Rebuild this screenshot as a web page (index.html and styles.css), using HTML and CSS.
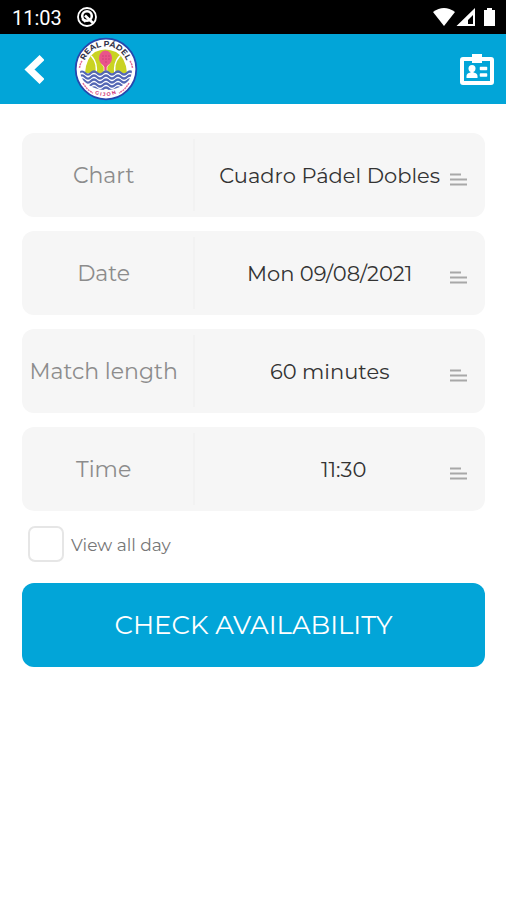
FILE: index.html
```html
<!DOCTYPE html>
<html lang="en">
<head>
<meta charset="utf-8">
<meta name="viewport" content="width=device-width, initial-scale=1">
<title>Check availability</title>
<link rel="stylesheet" href="styles.css">
</head>
<body>
<div class="status">
  <span class="clock">11:03</span>
  <svg class="status-app" width="22" height="22" viewBox="0 0 22 22" fill="none" stroke="#fff" aria-hidden="true">
    <circle cx="11" cy="11" r="9" stroke-width="1.800"/>
    <circle cx="11" cy="10" r="4.800" stroke-width="2.500"/>
    <path d="M9 9.500l8 7.500" stroke-width="2.600"/>
    <path d="M6 13l3.500 3" stroke-width="1.800"/>
  </svg>
  <svg class="status-icons" width="66" height="20" viewBox="0 0 66 20" fill="#fff" aria-hidden="true">
    <path d="M1 5Q12-3 23 5L12 19Z"/>
    <path fill-rule="evenodd" d="M43 1v18H24.500ZM41 8v9h-5v-4Z"/>
    <path d="M55 1h5v2h3v16H52V3h3Z"/>
  </svg>
</div>
<header class="bar">
  <button class="icon-button" type="button" aria-label="Back">
    <svg width="22" height="30" viewBox="0 0 22 30" fill="none" stroke="#fff" stroke-width="7"><path d="M20 3.500L7.500 15.500 20 27.500"/></svg>
  </button>
  <svg class="logo" width="64" height="64" viewBox="0 0 64 64" role="img" aria-label="Real Pádel">
    <defs>
      <path id="arc-top" d="M9 32a22.500 22.500 0 0 1 45 0"/>
      <path id="arc-bottom" d="M5 32a26.500 27 0 0 0 53 0"/>
      <clipPath id="court"><path d="M11 36Q12 21 21 15q10-5 21 0 10 6 11 21Z"/></clipPath>
      <clipPath id="sea"><path d="M6 33h52q0 9-7 14-9 6-19 6t-19-6q-7-5-7-14Z"/></clipPath>
    </defs>
    <circle cx="32" cy="32" r="30.300" fill="#fff" stroke="#2647ae" stroke-width="1.800"/>
    <g clip-path="url(#court)">
      <path d="M10 10h44v26H10Z" fill="#c9d322"/>
      <path d="M15 17q9 7 7 19M48 17q-9 7-7 19" fill="none" stroke="#fff" stroke-width="1.500"/>
    </g>
    <path d="M27 26l3 4v4h3v-4l3-4Z" fill="#e94b80" stroke="#fff" stroke-width=".7"/>
    <ellipse cx="31.500" cy="21" rx="6.500" ry="7.500" fill="#e9548a"/>
    <path d="M29 19h0M32 19h0M35 19h0M29 22h0M32 22h0M35 22h0M32 25h0" stroke="#a52b65" stroke-linecap="round"/>
    <g clip-path="url(#sea)" fill="none" stroke="#5366b4" stroke-width="2.200">
      <path d="M5 36q3-3 6 0t6 0 6 0 6 0 6 0 6 0 6 0 6 0 6 0"/>
      <path d="M5 40q3-3 6 0t6 0 6 0 6 0 6 0 6 0 6 0 6 0 6 0"/>
      <path d="M5 44q3-3 6 0t6 0 6 0 6 0 6 0 6 0 6 0 6 0 6 0"/>
      <path d="M5 48q3-3 6 0t6 0 6 0 6 0 6 0 6 0 6 0 6 0 6 0"/>
      <path d="M5 52q3-3 6 0t6 0 6 0 6 0 6 0 6 0 6 0 6 0 6 0"/>
    </g>
    <path d="M8 24q-2 3-2.500 7M56 24q2 3 2.500 7M9 46q4 7 10 10M55 46q-4 7-10 10" fill="none" stroke="#e36b98" stroke-width="1.500" stroke-dasharray="2 .7"/>
    <text class="logo-name"><textPath href="#arc-top" startOffset="50%">REAL PÁDEL</textPath></text>
    <text class="logo-town"><textPath href="#arc-bottom" startOffset="50%">G I J O N</textPath></text>
  </svg>
  <button class="icon-button card" type="button" aria-label="Membership card">
    <svg width="34" height="32" viewBox="0 0 34 32" fill="#fff">
      <path fill-rule="evenodd" d="M3 4h9V1h10v3h9q3 0 3 3v22q0 3-3 3H3q-3 0-3-3V7q0-3 3-3ZM4 8v20h26V8h-8v2H12V8Z"/>
      <circle cx="12" cy="15.500" r="3.500"/>
      <path d="M6.500 25v-2q0-3 4-3.500v-2h3v2q4 .5 4 3.500v2Z"/>
      <path d="M20.500 14.500h6v2h-6zM20.500 21h6v2h-6z" stroke="#fff" stroke-width="1.500" stroke-linejoin="round"/>
    </svg>
  </button>
</header>
<main>
  <form>
    <div class="field">
      <label for="chart">Chart</label>
      <div class="value">
        <select id="chart"><option>Cuadro Pádel Dobles</option></select>
        <svg class="lines" width="17" height="13" viewBox="0 0 17 13" aria-hidden="true"><path d="M0 1.500h11M0 6.500h17M0 11.500h17"/></svg>
      </div>
    </div>
    <div class="field">
      <label for="date">Date</label>
      <div class="value">
        <select id="date"><option>Mon 09/08/2021</option></select>
        <svg class="lines" width="17" height="13" viewBox="0 0 17 13" aria-hidden="true"><path d="M0 1.500h11M0 6.500h17M0 11.500h17"/></svg>
      </div>
    </div>
    <div class="field">
      <label for="length">Match length</label>
      <div class="value">
        <select id="length"><option>60 minutes</option></select>
        <svg class="lines" width="17" height="13" viewBox="0 0 17 13" aria-hidden="true"><path d="M0 1.500h11M0 6.500h17M0 11.500h17"/></svg>
      </div>
    </div>
    <div class="field">
      <label for="time">Time</label>
      <div class="value value-time">
        <select id="time"><option>11:30</option></select>
        <svg class="lines" width="17" height="13" viewBox="0 0 17 13" aria-hidden="true"><path d="M0 1.500h11M0 6.500h17M0 11.500h17"/></svg>
      </div>
    </div>
    <div class="all-day">
      <input type="checkbox" id="all-day">
      <label for="all-day">View all day</label>
    </div>
    <button class="submit" type="submit">CHECK AVAILABILITY</button>
  </form>
</main>
</body>
</html>
```
FILE: styles.css
```css
* {
  box-sizing: border-box;
}

body {
  margin: 0;
  background: #fff;
  font-family: Montserrat, Inter, "Liberation Sans", sans-serif;
  font-weight: 400;
}

.status {
  display: flex;
  align-items: center;
  height: 34px;
  padding: 0 8px 0 12px;
  background: #000;
  color: #fff;
}

.clock {
  padding-top: 2px;
  font: 400 20px/24px Roboto, sans-serif;
}

.status-app {
  margin-left: 14px;
}

.status-icons {
  margin-left: auto;
}

.bar {
  display: flex;
  align-items: center;
  height: 70px;
  padding: 0 12px 0 22px;
  background: #02a5d8;
}

.icon-button {
  display: flex;
  padding: 0;
  border: 0;
  background: none;
}

.logo {
  margin-left: 30px;
}

.card {
  margin-left: auto;
}

.logo-name,
.logo-town {
  font-family: Montserrat, Inter, sans-serif;
  font-weight: 700;
  text-anchor: middle;
}

.logo-name {
  fill: #33334a;
  font-size: 8px;
}

.logo-town {
  fill: #d0407c;
  font-size: 5px;
}

main {
  padding: 29px 21px 29px 22px;
}

form {
  display: flex;
  flex-direction: column;
  gap: 14px;
}

.field {
  display: grid;
  grid-template-columns: 37fr 63fr;
  align-items: center;
  height: 84px;
  border-radius: 12px;
  background: #f6f6f6;
}

.field label {
  padding: 2px 8px 0 0;
  color: #8c8c8c;
  font-size: 22px;
  line-height: 28px;
  text-align: center;
  white-space: nowrap;
}

.value {
  display: flex;
  align-items: center;
  height: 72px;
  padding-right: 18px;
  border-left: 2px solid #f2f2f2;
}

.value select {
  flex: 1;
  min-width: 0;
  height: 72px;
  padding: 0 0 0 14px;
  border: 0;
  appearance: none;
  background: none;
  color: #333;
  font: inherit;
  font-size: 21px;
  text-align: center;
  text-align-last: center;
}

.value-time select {
  padding-left: 42px;
}

.lines {
  margin-top: 8px;
  fill: none;
  stroke: #a8a8a8;
  stroke-width: 2;
}

.all-day {
  display: flex;
  align-items: center;
  gap: 7px;
  height: 36px;
  margin: 1px 0 7px;
  padding-left: 6px;
}

.all-day input {
  width: 36px;
  height: 36px;
  margin: 0;
  border: 2px solid #e6e6e6;
  border-radius: 7px;
  appearance: none;
  background: #fff;
}

.all-day input:checked {
  background: #02a5d8;
}

.all-day label {
  padding-top: 2px;
  color: #777;
  font-size: 17px;
  line-height: 20px;
}

.submit {
  height: 84px;
  border: 0;
  border-radius: 12px;
  background: #02a5d8;
  color: #fff;
  font: inherit;
  font-size: 26px;
}
```
